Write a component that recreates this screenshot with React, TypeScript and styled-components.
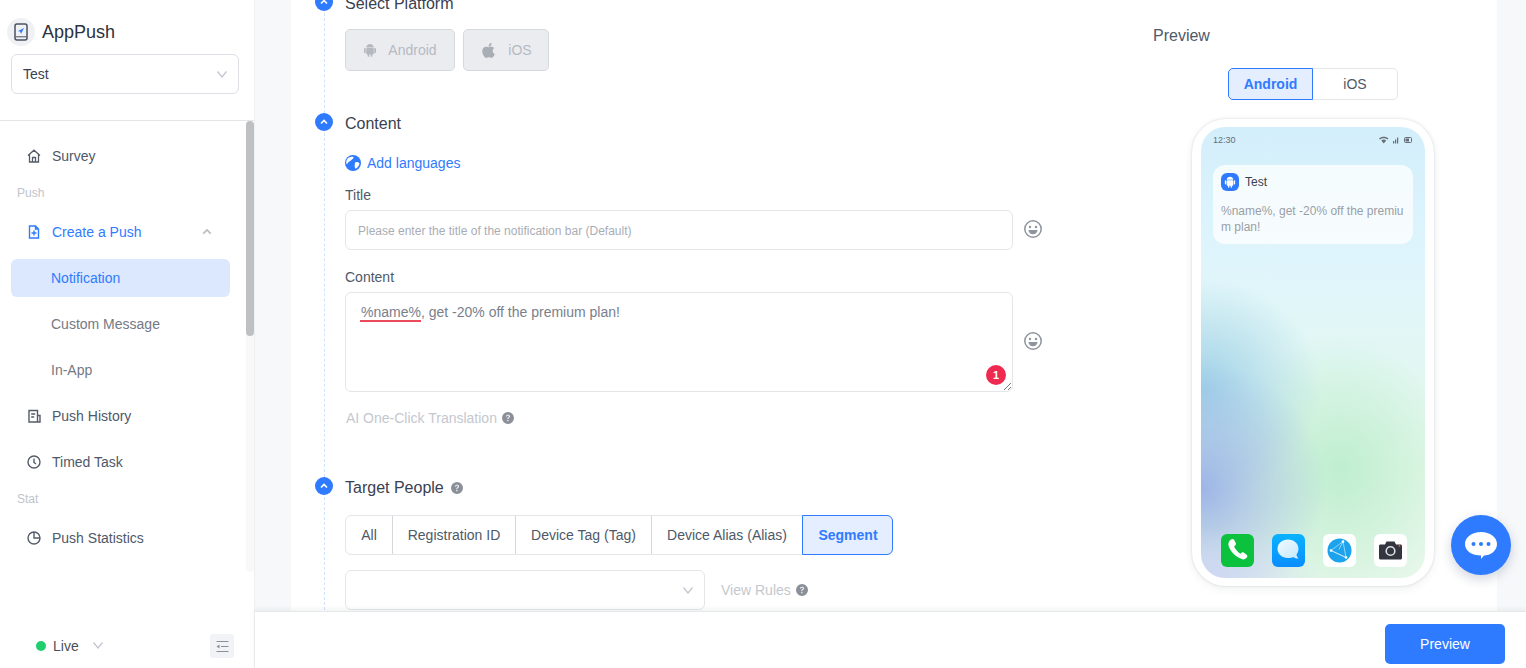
import React from "react";
import styled, { createGlobalStyle } from "styled-components";
import { FaApple } from "react-icons/fa";
import { BsQuestionCircleFill } from "react-icons/bs";

const Global = createGlobalStyle`
  html, body { margin: 0; padding: 0; height: 100%; background: #fff; }
  body { font-family: "Liberation Sans", Arial, sans-serif; font-size: 14px; color: #4e5969; }
  * { box-sizing: border-box; }
`;

const Page = styled.div`
  display: flex;
  position: relative;
  width: 1526px;
  height: 668px;
  overflow: hidden;
`;

/* ---------- sidebar ---------- */
const Sidebar = styled.aside`
  width: 255px;
  flex: none;
  display: flex;
  flex-direction: column;
  border-right: 1px solid #eeeff1;
  background: #fff;
`;
const SideTop = styled.div`
  height: 121px;
  flex: none;
  padding: 18px 15px 0 7px;
  border-bottom: 1px solid #e5e6e8;
`;
const Brand = styled.div`
  display: flex;
  align-items: center;
  gap: 7px;
  height: 28px;
  font-size: 18px;
  color: #2b3240;
`;
const BrandLogo = styled.span`
  width: 28px;
  height: 28px;
  border-radius: 50%;
  background: #f0f1f4;
  display: flex;
  align-items: center;
  justify-content: center;
`;
const AppSelect = styled.div`
  margin: 8px 0 0 4px;
  height: 40px;
  border: 1px solid #dcdfe4;
  border-radius: 6px;
  display: flex;
  align-items: center;
  justify-content: space-between;
  padding: 0 10px 0 11px;
  color: #3b4251;
`;
const NavArea = styled.div`
  flex: 1;
  display: flex;
  min-height: 0;
`;
const Menu = styled.nav`
  flex: 1;
  padding: 12px 0 0 11px;
`;
const ScrollRail = styled.div`
  width: 8px;
  height: 451px;
  border-radius: 4px;
  background: #f8f8f9;
`;
const ScrollThumb = styled.div`
  height: 215px;
  border-radius: 4px;
  background: #bfc0c2;
`;
const NavItem = styled.div<{ $active?: boolean }>`
  height: 46px;
  display: flex;
  align-items: center;
  gap: 11px;
  padding-left: 16px;
  width: 219px;
  color: ${(p) => (p.$active ? "#2f7bff" : "#4e5969")};
  svg { flex: none; }
`;
const NavChevron = styled.span`
  margin-left: auto;
  margin-right: 18px;
  display: flex;
`;
const NavGroup = styled.div`
  height: 28px;
  line-height: 28px;
  margin: 0 0 2px 6px;
  font-size: 12px;
  color: #c0c4cc;
`;
const SubList = styled.div`
  display: flex;
  flex-direction: column;
  gap: 8px;
  padding: 4px 0;
`;
const SubItem = styled.div<{ $active?: boolean }>`
  width: 219px;
  height: 38px;
  padding-left: 40px;
  display: flex;
  align-items: center;
  border-radius: 6px;
  color: ${(p) => (p.$active ? "#2f7bff" : "#747983")};
  background: ${(p) => (p.$active ? "#dbe8fd" : "transparent")};
`;
const SideFoot = styled.div`
  height: 56px;
  flex: none;
  display: flex;
  align-items: center;
  padding: 12px 20px 0 36px;
  color: #4a4f5c;
`;
const LiveDot = styled.span`
  width: 10px;
  height: 10px;
  border-radius: 50%;
  background: #1fce6d;
  margin-right: 7px;
`;
const LiveChevron = styled.span`
  display: flex;
  margin: -2px 0 0 13px;
`;
const CollapseBtn = styled.span`
  margin-left: auto;
  width: 24px;
  height: 24px;
  border-radius: 3px;
  background: #f2f3f7;
  display: flex;
  align-items: center;
  justify-content: center;
`;

/* ---------- main ---------- */
const Main = styled.main`
  flex: 1;
  min-width: 0;
  display: flex;
  flex-direction: column;
  background: #f7f8fa;
`;
const Scroller = styled.div`
  flex: 1;
  min-height: 0;
  overflow: hidden;
  padding: 0 29px 0 36px;
`;
const Card = styled.div`
  margin-top: -20px;
  padding: 13px 0 0 24px;
  background: #fff;
  display: flex;
  height: 700px;
`;
const Form = styled.div`
  width: 738px;
  flex: none;
`;
const SectionHead = styled.div`
  height: 20px;
  display: flex;
  align-items: flex-start;
  gap: 12px;
  font-size: 16px;
  color: #3a4150;
`;
const HeadLabel = styled.span`
  display: flex;
  align-items: center;
  gap: 7px;
  height: 20px;
  margin-top: 1px;
`;
const StepDot = styled.span`
  width: 18px;
  height: 18px;
  border-radius: 50%;
  background: #2f7bff;
  display: flex;
  align-items: center;
  justify-content: center;
  flex: none;
`;
const SectionBody = styled.div<{ $top: number; $bottom: number }>`
  margin-left: 9px;
  padding: ${(p) => p.$top}px 0 ${(p) => p.$bottom}px 20px;
  border-left: 1px dashed #cfe3ff;
`;
const Platforms = styled.div`
  display: flex;
  gap: 8px;
`;
const PlatformBtn = styled.div<{ $w: number }>`
  width: ${(p) => p.$w}px;
  height: 42px;
  background: #ebecf0;
  border: 1px solid #d6d8dd;
  border-radius: 5px;
  color: #b6bac2;
  display: flex;
  align-items: center;
  justify-content: center;
  gap: 11px;
`;
const AddLang = styled.div`
  height: 20px;
  display: flex;
  align-items: center;
  gap: 6px;
  color: #2f7bff;
`;
const FieldLabel = styled.div<{ $top: number }>`
  height: 20px;
  line-height: 20px;
  margin: ${(p) => p.$top}px 0 5px;
  color: #4e5969;
`;
const FieldRow = styled.div`
  display: flex;
  align-items: center;
  gap: 10px;
`;
const SmileSlot = styled.span`
  display: flex;
  margin-bottom: 2px;
`;
const TextBox = styled.div`
  width: 668px;
  height: 40px;
  border: 1px solid #e4e6ea;
  border-radius: 6px;
  padding: 1px 12px 0;
  display: flex;
  align-items: center;
  font-size: 12px;
  color: #a9adb5;
`;
const AreaBox = styled.div`
  position: relative;
  width: 668px;
  height: 100px;
  border: 1px solid #e4e6ea;
  border-radius: 6px;
  padding: 11px 14px;
  line-height: 16px;
  color: #7a808b;
`;
const Variable = styled.span`
  border-bottom: 2px solid #ea4a5b;
  padding-left: 1px;
`;
const Badge = styled.span`
  position: absolute;
  right: 6px;
  bottom: 6px;
  width: 20px;
  height: 20px;
  border-radius: 50%;
  background: #ef2a50;
  color: #fff;
  font-size: 11px;
  font-weight: 700;
  display: flex;
  align-items: center;
  justify-content: center;
`;
const ResizeGrip = styled.svg`
  position: absolute;
  right: 0;
  bottom: 0;
`;
const HintLine = styled.div`
  height: 20px;
  margin-top: 16px;
  padding-left: 1px;
  display: flex;
  align-items: center;
  gap: 5px;
  color: #c4c8ce;
`;
const Tabs = styled.div`
  display: inline-flex;
  height: 40px;
  border: 1px solid #e4e6ea;
  border-radius: 6px;
  vertical-align: top;
`;
const Tab = styled.div<{ $w: number; $active?: boolean }>`
  width: ${(p) => p.$w}px;
  display: flex;
  align-items: center;
  justify-content: center;
  border-left: 1px solid #d4d6da;
  color: #4e5969;
  &:first-child { border-left: 0; }
  ${(p) =>
    p.$active &&
    `
    margin: -1px -1px -1px 0;
    padding-left: 1px;
    background: #e5eefe;
    border: 1px solid #2f7bff;
    border-radius: 0 6px 6px 0;
    color: #2f7bff;
    font-weight: 700;
  `}
`;
const SegmentRow = styled.div`
  margin-top: 15px;
  display: flex;
  align-items: center;
  gap: 16px;
`;
const SegmentSelect = styled.div`
  width: 360px;
  height: 40px;
  border: 1px solid #e4e6ea;
  border-radius: 6px;
  display: flex;
  align-items: center;
  justify-content: flex-end;
  padding-right: 10px;
  background: #fff;
`;
const RulesHint = styled.div`
  display: flex;
  align-items: center;
  gap: 5px;
  color: #c4c8ce;
`;

/* ---------- preview ---------- */
const PreviewCol = styled.section`
  margin-left: 100px;
  width: 290px;
  flex: none;
  padding-top: 33px;
`;
const PreviewTitle = styled.div`
  height: 20px;
  line-height: 20px;
  font-size: 16px;
  color: #4e5969;
`;
const Switch = styled.div`
  margin: 22px 0 0 75px;
  display: flex;
  width: 170px;
  height: 32px;
  border: 1px solid #e4e6ea;
  border-radius: 5px;
`;
const SwitchOption = styled.div<{ $active?: boolean }>`
  display: flex;
  align-items: center;
  justify-content: center;
  flex: ${(p) => (p.$active ? "0 0 85px" : "1")};
  color: ${(p) => (p.$active ? "#2f7bff" : "#4e5969")};
  font-weight: ${(p) => (p.$active ? 700 : 400)};
  ${(p) =>
    p.$active &&
    `
    margin: -1px 0 -1px -1px;
    background: #e5eefe;
    border: 1px solid #2f7bff;
    border-radius: 5px 0 0 5px;
  `}
`;
const Phone = styled.div`
  margin: 19px 0 0 39px;
  width: 242px;
  height: 467px;
  padding: 8px 9px;
  background: #fff;
  border-radius: 34px;
  box-shadow: 0 0 3px rgba(40, 50, 70, 0.16), 0 3px 10px rgba(40, 50, 70, 0.07);
`;
const Screen = styled.div`
  height: 451px;
  border-radius: 24px;
  padding: 0 12px;
  display: flex;
  flex-direction: column;
  background:
    radial-gradient(ellipse 120px 50px at 0% 100%, #ced7f3 0%, rgba(206, 215, 243, 0) 100%),
    radial-gradient(ellipse 125px 125px at 0% 80%, #9cb5e6 0%, rgba(156, 181, 230, 0) 100%),
    radial-gradient(ellipse 120px 110px at 0% 58%, #9ed0e8 0%, rgba(158, 208, 232, 0) 100%),
    radial-gradient(ellipse 115px 135px at 62% 76%, #bfeed0 0%, rgba(191, 238, 208, 0) 100%),
    linear-gradient(180deg, #d3effb 0%, #dff5fc 30%, #e2f7f3 52%, #e2f7e6 75%, #e6f7ea 100%);
`;
const StatusBar = styled.div`
  height: 26px;
  display: flex;
  align-items: center;
  justify-content: space-between;
  font-size: 9px;
  color: #666c78;
`;
const Notice = styled.div`
  margin-top: 12px;
  height: 79px;
  padding: 8px;
  border-radius: 12px;
  background: rgba(255, 255, 255, 0.75);
  font-size: 12px;
`;
const NoticeHead = styled.div`
  display: flex;
  align-items: center;
  gap: 6px;
  height: 18px;
  color: #3a4150;
`;
const NoticeIcon = styled.span`
  width: 18px;
  height: 18px;
  border-radius: 6px;
  background: #2f7bff;
  display: flex;
  align-items: center;
  justify-content: center;
`;
const NoticeText = styled.div`
  margin-top: 12px;
  line-height: 16px;
  color: #9a9ea6;
  word-break: break-all;
`;
const Dock = styled.div`
  margin-top: auto;
  margin-bottom: 11px;
  padding: 0 6px 0 8px;
  display: flex;
  justify-content: space-between;
`;

const ChatFab = styled.div`
  position: absolute;
  left: 1451px;
  top: 515px;
  width: 60px;
  height: 60px;
  border-radius: 50%;
  background: #2f7bff;
  box-shadow: 0 4px 12px rgba(40, 60, 110, 0.22);
  display: flex;
  align-items: center;
  justify-content: center;
`;
const Footer = styled.footer`
  height: 57px;
  flex: none;
  position: relative;
  background: #fff;
  border-top: 1px solid #e6e8ea;
  box-shadow: 0 -2px 4px rgba(40, 50, 70, 0.07);
  display: flex;
  align-items: center;
  justify-content: flex-end;
  padding: 8px 21px 0 0;
`;
const PrimaryBtn = styled.div`
  width: 120px;
  height: 40px;
  border-radius: 5px;
  background: #2f7bff;
  color: #fff;
  display: flex;
  align-items: center;
  justify-content: center;
`;

/* ---------- drawings ---------- */
const Chevron = ({ up, color = "#c0c4cc", size = 12, w = 1.2 }: { up?: boolean; color?: string; size?: number; w?: number }) => (
  <svg width={size} height={size} viewBox="0 0 12 12" fill="none" stroke={color} strokeWidth={w}>
    <path d={up ? "M1.5 8 6 3.5 10.5 8" : "M1.5 3.5 6 9 10.5 3.5"} />
  </svg>
);
const Robot = ({ size, color }: { size: number; color: string }) => (
  <svg width={size} height={size} viewBox="0 0 14 14" fill={color}>
    <path d="M3.200 4.500C3.300 2.400 4.900 1 7 1s3.700 1.400 3.800 3.500z" />
    <rect x="3.200" y="5" width="7.600" height="6.300" rx="0.800" />
    <rect x="1" y="5" width="1.700" height="5" rx="0.850" />
    <rect x="11.300" y="5" width="1.700" height="5" rx="0.850" />
    <rect x="4.600" y="10.500" width="1.700" height="3.300" rx="0.850" />
    <rect x="7.700" y="10.500" width="1.700" height="3.300" rx="0.850" />
  </svg>
);
const Help = () => <BsQuestionCircleFill size={12} color="#8b8f99" />;
const Smile = () => (
  <SmileSlot>
    <svg width="20" height="20" viewBox="0 0 20 20" fill="none">
      <circle cx="10" cy="10" r="8.2" stroke="#8f959e" strokeWidth="1.5" />
      <circle cx="7" cy="8" r="1.2" fill="#8f959e" />
      <circle cx="13" cy="8" r="1.2" fill="#8f959e" />
      <path d="M5.4 11h9.2c-.4 2.7-2.2 4.3-4.6 4.3S5.800 13.700 5.400 11z" fill="#8f959e" />
    </svg>
  </SmileSlot>
);
const ICON = "#555b68";
const HomeIcon = () => (
  <svg width="14" height="14" viewBox="0 0 14 14" fill="none" stroke={ICON} strokeWidth="1.3">
    <path d="M1 6.500 7 1.200l6 5.300M2.500 5.500V13h9V5.500M5.500 13V8.500h3V13" />
  </svg>
);
const FilePlusIcon = () => (
  <svg width="14" height="14" viewBox="0 0 14 14" fill="none" stroke="#2f7bff" strokeWidth="1.4">
    <path d="M8.500 1H2.500v12h9V4zM8.500 1v3h3M7 5.500v5M4.500 8h5" />
  </svg>
);
const HistoryIcon = () => (
  <svg width="14" height="14" viewBox="0 0 14 14" fill="none" stroke={ICON} strokeWidth="1.4">
    <path d="M10.500 13H2V1.500h8.500V13zM10.500 6.500H13V13h-2.500M4.200 5h4M4.200 8h3" />
  </svg>
);
const ClockIcon = () => (
  <svg width="14" height="14" viewBox="0 0 14 14" fill="none" stroke={ICON} strokeWidth="1.4">
    <circle cx="7" cy="7" r="6" />
    <path d="M7 3.500V7.500l2 1.500" />
  </svg>
);
const PieIcon = () => (
  <svg width="14" height="14" viewBox="0 0 14 14" fill="none" stroke={ICON} strokeWidth="1.4">
    <circle cx="7" cy="7" r="6" />
    <path d="M7 1v6h6" />
  </svg>
);
const Caret = () => (
  <svg width="10" height="10" viewBox="0 0 10 10" fill="none" stroke="#fff" strokeWidth="1.6">
    <path d="M2 6.500 5 3.500l3 3" />
  </svg>
);
const Globe = () => (
  <svg width="16" height="16" viewBox="0 0 16 16">
    <circle cx="8" cy="8" r="8" fill="#2f7bff" />
    <path d="M3.500 2.800c2-1.200 3.700-1.300 5-.8.500 1.500-1.500 2.300-2.400 3.300-1 1.200-2.500 1-3.300 2.600-.5 1-1 1.400-1.500.6-.3-2.300.6-4.500 2.200-5.700zM10.500 7.200c1.500-.5 3.200.1 4 1.300-.5 2.400-1.800 4-3.800 5.200-1.200-1.300-1.100-3.300-.9-4.300.1-1 .1-2 .7-2.200z" fill="#fff" />
  </svg>
);
const AppLogo = () => (
  <svg width="14" height="18" viewBox="0 0 14 18" fill="none">
    <rect x="1" y="1" width="12" height="16" rx="2" stroke="#4b5261" strokeWidth="1.500" />
    <path d="M1.500 13.800h11" stroke="#4b5261" />
    <path d="M10 5 4 8l2.300.8.700 2.200z" fill="#2f7bff" />
  </svg>
);
const CollapseIcon = () => (
  <svg width="13" height="11" viewBox="0 0 13 11" fill="#8a8f9a">
    <rect x="0.500" y="0" width="12" height="1" />
    <rect x="5" y="5" width="7.500" height="1" />
    <rect x="0.500" y="10" width="12" height="1" />
    <path d="M0.500 5.500 3.500 3.500v4z" />
  </svg>
);
const PhoneApp = () => (
  <svg width="33" height="33" viewBox="0 0 33 33">
    <rect width="33" height="33" rx="6" fill="#0bc13d" />
    <path d="M10 5.500c1.500-1 2.500-.6 3.200.6l1.500 3c.5 1 .2 1.700-.5 2.300l-1.100.9c.8 2.500 3.500 5.900 6.300 7.400l1.200-.9c.8-.6 1.500-.6 2.300 0l2.700 2c1 .8 1 1.800.2 2.800-1.500 1.800-3.400 2.300-5.600 1.200C14 22.500 9 17 7.500 11.500 7 9 8.200 6.700 10 5.500z" fill="#fff" />
  </svg>
);
const MessageApp = () => (
  <svg width="33" height="33" viewBox="0 0 33 33">
    <defs>
      <linearGradient id="msgBg" x1="0" y1="0" x2="0" y2="1">
        <stop offset="0" stopColor="#08b3ff" />
        <stop offset="1" stopColor="#0a8dff" />
      </linearGradient>
      <linearGradient id="msgBubble" x1="0" y1="0" x2="1" y2="1">
        <stop offset="0" stopColor="#f2fbff" />
        <stop offset="1" stopColor="#c4e8fb" />
      </linearGradient>
    </defs>
    <rect width="33" height="33" rx="6" fill="url(#msgBg)" />
    <path d="M16 5.500c6 0 10.500 4 10.500 9.300 0 2.200-.8 4.200-2 5.700.2 1.800 1 3 2.300 4-2.200.2-4-.4-5.300-1.500-1.500.7-3.400 1-5.500 1-6 0-10.500-3.900-10.500-9.200S10 5.500 16 5.500z" fill="url(#msgBubble)" />
  </svg>
);
const BrowserApp = () => (
  <svg width="33" height="33" viewBox="0 0 33 33">
    <rect width="33" height="33" rx="6" fill="#fff" />
    <circle cx="16.500" cy="16.500" r="12" fill="#1ba3ee" />
    <path d="M8 16.500 20 7.500l3 16zM8 16.500l15 7M20 7.500l-4 8" fill="none" stroke="#e8f6fd" strokeWidth="0.600" />
    <circle cx="8" cy="16.500" r="1.300" fill="#fff" />
    <circle cx="20" cy="7.500" r="1.300" fill="#fff" />
    <circle cx="23" cy="23.500" r="1.300" fill="#fff" />
  </svg>
);
const CameraApp = () => (
  <svg width="33" height="33" viewBox="0 0 33 33">
    <rect width="33" height="33" rx="6" fill="#fff" />
    <path d="M5 12c0-1 .7-1.500 1.500-1.500H11l1.500-3h8l1.500 3h4.500c.8 0 1.500.6 1.500 1.500v12c0 .9-.7 1.500-1.500 1.500h-20C5.700 25.500 5 24.900 5 24z" fill="#33353f" />
    <circle cx="16.500" cy="17" r="4.300" fill="none" stroke="#dfe1e6" strokeWidth="1.600" />
    <circle cx="25.500" cy="12" r="0.900" fill="#f0524a" />
  </svg>
);
const ChatIcon = () => (
  <svg width="34" height="29" viewBox="0 0 34 29">
    <path d="M17 1c9 0 16 5 16 12s-7 11.500-13 11.500l-3 3.500v-3.500C8 24.500 1 20 1 13S8 1 17 1z" fill="#fff" />
    <circle cx="9.500" cy="13" r="2" fill="#2f7bff" />
    <circle cx="17" cy="13" r="2" fill="#2f7bff" />
    <circle cx="24.500" cy="13" r="2" fill="#2f7bff" />
  </svg>
);

export default function App() {
  return (
    <Page>
      <Global />
      <Sidebar>
        <SideTop>
          <Brand>
            <BrandLogo><AppLogo /></BrandLogo>
            AppPush
          </Brand>
          <AppSelect>
            Test
            <Chevron />
          </AppSelect>
        </SideTop>
        <NavArea>
          <Menu>
            <NavItem><HomeIcon />Survey</NavItem>
            <NavGroup>Push</NavGroup>
            <NavItem $active>
              <FilePlusIcon />Create a Push
              <NavChevron><Chevron up size={10} color="#b9bcc2" w={2} /></NavChevron>
            </NavItem>
            <SubList>
              <SubItem $active>Notification</SubItem>
              <SubItem>Custom Message</SubItem>
              <SubItem>In-App</SubItem>
            </SubList>
            <NavItem><HistoryIcon />Push History</NavItem>
            <NavItem><ClockIcon />Timed Task</NavItem>
            <NavGroup>Stat</NavGroup>
            <NavItem><PieIcon />Push Statistics</NavItem>
          </Menu>
          <ScrollRail><ScrollThumb /></ScrollRail>
        </NavArea>
        <SideFoot>
          <LiveDot />Live
          <LiveChevron><Chevron /></LiveChevron>
          <CollapseBtn><CollapseIcon /></CollapseBtn>
        </SideFoot>
      </Sidebar>
      <Main>
        <Scroller>
          <Card>
            <Form>
              <SectionHead><StepDot><Caret /></StepDot><HeadLabel>Select Platform</HeadLabel></SectionHead>
              <SectionBody $top={16} $bottom={42}>
                <Platforms>
                  <PlatformBtn $w={110}><Robot size={14} color="#b4b8bf" />Android</PlatformBtn>
                  <PlatformBtn $w={86}><FaApple size={17} color="#a9adb5" />iOS</PlatformBtn>
                </Platforms>
              </SectionBody>
              <SectionHead><StepDot><Caret /></StepDot><HeadLabel>Content</HeadLabel></SectionHead>
              <SectionBody $top={20} $bottom={49}>
                <AddLang><Globe />Add languages</AddLang>
                <FieldLabel $top={12}>Title</FieldLabel>
                <FieldRow>
                  <TextBox>Please enter the title of the notification bar (Default)</TextBox>
                  <Smile />
                </FieldRow>
                <FieldLabel $top={17}>Content</FieldLabel>
                <FieldRow>
                  <AreaBox>
                    <Variable>%name%</Variable>, get -20% off the premium plan!
                    <Badge>1</Badge>
                    <ResizeGrip width="10" height="10" viewBox="0 0 10 10" stroke="#555" strokeWidth="0.8">
                      <path d="M2 9 9 2M6 9l3-3" />
                    </ResizeGrip>
                  </AreaBox>
                  <Smile />
                </FieldRow>
                <HintLine>AI One-Click Translation <Help /></HintLine>
              </SectionBody>
              <SectionHead><StepDot><Caret /></StepDot><HeadLabel>Target People <Help /></HeadLabel></SectionHead>
              <SectionBody $top={18} $bottom={30}>
                <Tabs>
                  <Tab $w={46}>All</Tab>
                  <Tab $w={123}>Registration ID</Tab>
                  <Tab $w={136}>Device Tag (Tag)</Tab>
                  <Tab $w={151}>Device Alias (Alias)</Tab>
                  <Tab $w={91} $active>Segment</Tab>
                </Tabs>
                <SegmentRow>
                  <SegmentSelect><Chevron /></SegmentSelect>
                  <RulesHint>View Rules <Help /></RulesHint>
                </SegmentRow>
              </SectionBody>
            </Form>
            <PreviewCol>
              <PreviewTitle>Preview</PreviewTitle>
              <Switch>
                <SwitchOption $active>Android</SwitchOption>
                <SwitchOption>iOS</SwitchOption>
              </Switch>
              <Phone>
                <Screen>
                  <StatusBar>
                    12:30
                    <svg width="34" height="8" viewBox="0 0 34 8" fill="#666c78">
                      <path d="M0 2.500C2.500 0 7 0 9.500 2.500L8.500 3.500C6.500 1.800 3 1.800 1 3.500zM2.300 4.500C3.500 3.200 6 3.200 7.200 4.500L4.750 7.500z" />
                      <path d="M14 5h1.200v2.500H14zM16 3.500h1.200v4H16zM18 1.500h1.200v6H18z" />
                      <rect x="25.500" y="1.500" width="7" height="5" rx="1" fill="none" stroke="#666c78" />
                      <rect x="26.500" y="2.500" width="3.500" height="3" />
                    </svg>
                  </StatusBar>
                  <Notice>
                    <NoticeHead>
                      <NoticeIcon><Robot size={12} color="#fff" /></NoticeIcon>
                      Test
                    </NoticeHead>
                    <NoticeText>%name%, get -20% off the premium plan!</NoticeText>
                  </Notice>
                  <Dock>
                    <PhoneApp />
                    <MessageApp />
                    <BrowserApp />
                    <CameraApp />
                  </Dock>
                </Screen>
              </Phone>
            </PreviewCol>
          </Card>
        </Scroller>
        <Footer><PrimaryBtn>Preview</PrimaryBtn></Footer>
      </Main>
      <ChatFab><ChatIcon /></ChatFab>
    </Page>
  );
}
